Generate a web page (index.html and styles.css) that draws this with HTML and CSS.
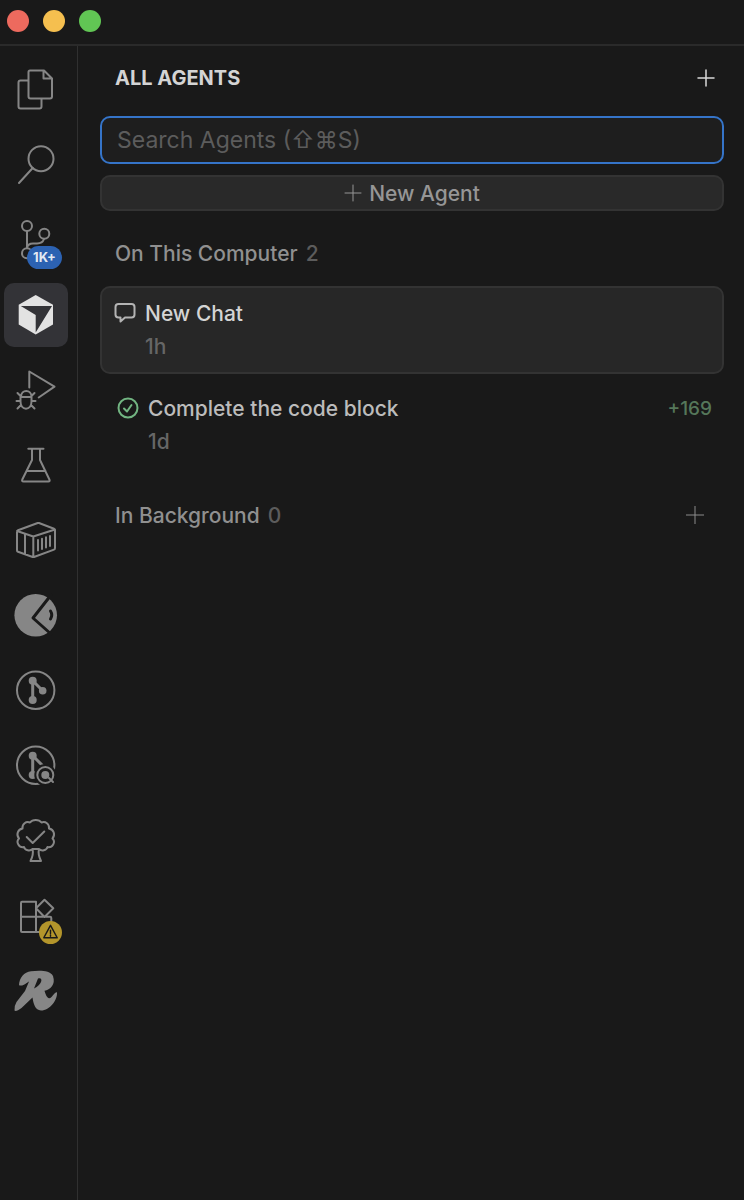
FILE: index.html
```html
<!DOCTYPE html>
<html lang="en">
  <head>
    <meta charset="utf-8" />
    <title>All Agents</title>
    <link rel="stylesheet" href="styles.css">
  </head>
  <body>
    <header class="titlebar">
      <button class="light red" aria-label="Close"></button>
      <button class="light yellow" aria-label="Minimize"></button>
      <button class="light green" aria-label="Zoom"></button>
    </header>

    <div class="window">
      <nav class="activity-bar">
        <button class="activity" aria-label="Explorer">
          <svg viewBox="0 0 64 64">
            <path d="M26 12.500H40L48 20.500V38.500Q48 40.500 46 40.500H26.500Q24.500 40.500 24.500 38.500V14Q24.500 12.500 26 12.500ZM39.500 12.500V20.500H48M24.500 22.500H16.500Q14.500 22.500 14.500 24.500V48.500Q14.500 50.500 16.500 50.500H35.500Q37.500 50.500 37.500 48.500V40.500" />
          </svg>
        </button>
        <button class="activity" aria-label="Search">
          <svg viewBox="0 0 64 64">
            <circle cx="37" cy="25.700" r="12.500" />
            <path d="M28.700 35L15 50" />
          </svg>
        </button>
        <button class="activity" aria-label="Source Control">
          <svg viewBox="0 0 64 64">
            <circle cx="23" cy="18" r="5" />
            <circle cx="40.300" cy="25.700" r="5" />
            <circle cx="23" cy="45.300" r="5" />
            <path d="M23 23V40M40 31C39 34 37 35.500 33 35.500H29C25.500 35.500 23.500 37 23 40" />
          </svg>
          <span class="badge count">1K+</span>
        </button>
        <button class="activity active" aria-label="Agents">
          <svg viewBox="0 0 64 64">
            <path class="solid" d="M31.700 12L49 21.800V41.600L31.700 51.500L14.700 41.600V21.800Z" />
            <path class="cut" d="M16.800 23H48L31.700 49.500V32Z" />
          </svg>
        </button>
        <button class="activity" aria-label="Run and Debug">
          <svg viewBox="0 0 64 64">
            <path d="M25.300 29.500V13.500L50.500 28.700L34.700 39.500" />
            <path d="M17 39C17 31 27.500 31 27.500 39V43.500C27.500 53 16.500 53 16.500 43.500V39ZM16.500 39H27.500M16.500 38L13.500 35M27.500 38L30.500 35M16 43H12.500M28 43H31.500M17 47L13.500 50.500M27 47L30.500 50.500" />
          </svg>
        </button>
        <button class="activity" aria-label="Testing">
          <svg viewBox="0 0 64 64">
            <path d="M24.300 15.700H39.500M28 16V27L18.300 46.500Q17.500 48.500 19.500 48.500H44.300Q46.300 48.500 45.400 46.500L36 27V16M22.500 38H41.500" />
          </svg>
        </button>
        <button class="activity" aria-label="Containers">
          <svg viewBox="0 0 64 64">
            <path d="M33.700 15Q34.300 14.800 35 15L50 20.700Q51 21.100 51 22V40Q51 41.300 50 41.600L30 49Q29.300 49.200 28.600 49L14 43.800Q13 43.500 13 42.500V24Q13 22.700 14 22.300ZM13 23L29.300 28.500L51 21.500M29.300 28.500V49M21 26V46M34 32V42.500M38 30.700V41M42 29.300V39.600M46 28V38" />
          </svg>
        </button>
        <button class="activity" aria-label="Test Explorer">
          <svg viewBox="0 0 64 64">
            <circle class="solid" cx="31.700" cy="32.200" r="21.300" />
            <path class="gap" d="M47 12L29 35L47 51M46.500 28Q49 32 46.500 36" />
          </svg>
        </button>
        <button class="activity" aria-label="GitLens">
          <svg viewBox="0 0 64 64">
            <circle cx="31.700" cy="32.300" r="18.700" />
            <path class="branch" d="M28.700 22.700V42M28.700 22.700L38.700 32.700" />
            <circle class="solid" cx="28.700" cy="22.700" r="4" />
            <circle class="solid" cx="38.700" cy="32.700" r="3.800" />
            <circle class="solid" cx="28.700" cy="42" r="4" />
          </svg>
        </button>
        <button class="activity" aria-label="GitLens Inspect">
          <svg viewBox="0 0 64 64">
            <circle cx="31.700" cy="32.300" r="18.700" />
            <path class="branch" d="M28.700 22.700V42M28.700 22.700L38.700 32.700" />
            <circle class="solid" cx="28.700" cy="22.700" r="4" />
            <circle class="solid" cx="28.700" cy="42" r="4" />
            <circle class="halo" cx="41.300" cy="42" r="11" />
            <circle class="lens" cx="41.300" cy="42" r="8" />
            <circle class="solid" cx="41.300" cy="42" r="4" />
            <path class="lens" d="M45 45L49 49" />
          </svg>
        </button>
        <button class="activity" aria-label="Tree">
          <svg viewBox="0 0 64 64">
            <path d="M28.500 41C26 43.500 21 42.500 20 39C15 40 11.500 34 15 30.500C12 27 13.500 21.500 18.500 20.500C18 16 22 13 26 14.500C28.500 11 35 11 37.500 14.500C41.500 13 45.500 16 45 20.500C50 21.500 51.500 27 48.500 30.500C52 34 48.500 40 43.500 39C42.500 42.500 37.500 43.500 35 41M28.500 41H35M28.500 41C29.500 45 28.500 49 26.500 53H37C35 49 34 45 35 41" />
            <path d="M22.700 29L28.700 35L40.300 23.500" />
          </svg>
        </button>
        <button class="activity" aria-label="Extensions">
          <svg viewBox="0 0 64 64">
            <path d="M18 18.700H32V49H18Q17 49 17 48V20Q17 18.700 18 18.700ZM17 33.700H46Q47.300 33.700 47.300 35V49H32M40.500 16.700L49.300 25.300L40.500 34L32 25.300Z" />
          </svg>
          <span class="badge warning">
            <svg viewBox="0 0 24 24">
              <path d="M12 4.500L19 17.500H5ZM12 9.500V13M12 14.500V16" />
            </svg>
          </span>
        </button>
        <button class="activity" aria-label="R">
          <svg viewBox="0 0 64 64">
            <path class="solid" d="M15 27.300C15.300 20 20 14 27 13.300C35 12.500 46 12 49 18C52 27 46 31.500 40.500 32.800C42 38 44 42.500 47.500 39C50 36.500 51.500 33.500 53 34.500C53.500 42 46 52.500 37 52.500C31 52 29.500 46 28.500 39.500L17.500 50Q12 54 10.500 52.500Q10 48 12.500 44L21 33L25 23.500C22 25 20 28.500 15 27.300Z" />
            <path class="gap-fill" d="M34 20.500C39 18.500 39 26 30 30.500Z" />
          </svg>
        </button>
      </nav>

      <main class="panel">
        <div class="panel-header">
          <h1>ALL AGENTS</h1>
          <button class="add bright" aria-label="Add agent">
            <svg viewBox="0 0 18 18"><path d="M9 1V17M1 9H17" /></svg>
          </button>
        </div>

        <input class="search" type="text" aria-label="Search Agents" placeholder="Search Agents (⇧⌘S)" />
        <button class="new-agent">
          <svg viewBox="0 0 18 18"><path d="M9 1V17M1 9H17" /></svg>
          New Agent
        </button>

        <div class="section">
          <h2>On This Computer</h2>
          <span class="total">2</span>
        </div>
        <div class="agents">
          <div class="agent selected">
            <svg class="agent-icon" viewBox="0 0 22 22">
              <path d="M4.500 2H17.500Q20.500 2 20.500 5V12.500Q20.500 15.500 17.500 15.500H11L6.500 19.500V15.500H4.500Q1.500 15.500 1.500 12.500V5Q1.500 2 4.500 2Z" />
            </svg>
            <div class="agent-text">
              <h3>New Chat</h3>
              <div class="time">1h</div>
            </div>
          </div>
          <div class="agent done">
            <svg class="agent-icon" viewBox="0 0 22 22">
              <circle cx="11" cy="11" r="9.500" />
              <path d="M7 11.500L10 14.500L14.500 8" />
            </svg>
            <div class="agent-text">
              <h3>Complete the code block</h3>
              <div class="time">1d</div>
            </div>
            <span class="added">+169</span>
          </div>
        </div>

        <div class="section">
          <h2>In Background</h2>
          <span class="total">0</span>
          <button class="add" aria-label="Add background agent">
            <svg viewBox="0 0 18 18"><path d="M9 0V18M0 9H18" /></svg>
          </button>
        </div>
      </main>
    </div>
  </body>
</html>
```
FILE: styles.css
```css
* {
  box-sizing: border-box;
}
body {
  display: flex;
  flex-direction: column;
  min-height: 100vh;
  margin: 0;
  background-color: #191919;
  color: #d4d4d4;
  font-family: Inter, "Liberation Sans", "DejaVu Sans", sans-serif;
  font-size: 21px;
  font-weight: 500;
}
h1,
h2,
h3 {
  margin: 0;
  font-size: inherit;
  font-weight: inherit;
}
button {
  padding: 0;
  border: 0;
  background: none;
  color: inherit;
  font: inherit;
}
svg {
  display: block;
  fill: none;
  stroke: currentColor;
  stroke-width: 2;
  stroke-linecap: round;
  stroke-linejoin: round;
}

/* title bar */
.titlebar {
  display: flex;
  align-items: center;
  gap: 14px;
  height: 46px;
  padding: 0 7px 2px;
  border-bottom: 2px solid #2a2a2a;
}
.light {
  width: 22px;
  height: 22px;
  border-radius: 50%;
}
.light.red {
  background-color: #ed6a5e;
}
.light.yellow {
  background-color: #f5bf4f;
}
.light.green {
  background-color: #61c554;
}

.window {
  display: flex;
  flex: 1;
}

/* activity bar */
.activity-bar {
  display: flex;
  flex-direction: column;
  gap: 11px;
  flex: none;
  padding: 12px 9px 12px 4px;
  border-right: 1px solid #303030;
}
.activity {
  position: relative;
  width: 64px;
  height: 64px;
  border-radius: 10px;
  color: #868686;
}
.activity.active {
  background-color: #333337;
  color: #e2e2e2;
}
.solid {
  fill: currentColor;
  stroke: none;
}
.cut {
  fill: #333337;
  stroke: none;
}
.gap {
  stroke: #191919;
  stroke-width: 3;
}
.gap-fill,
.halo {
  fill: #191919;
  stroke: none;
}
.branch {
  stroke-width: 3;
}
.badge {
  position: absolute;
  right: 6px;
  bottom: 3px;
  border-radius: 12px;
}
.count {
  width: 35px;
  height: 23px;
  background-color: #2c62b2;
  color: #e4e9f2;
  font-size: 13px;
  font-weight: 700;
  line-height: 23px;
  text-align: center;
}
.warning {
  width: 23px;
  height: 23px;
  background-color: #b3952b;
  color: #191919;
}
.warning svg {
  stroke-width: 1.5;
}

/* agents panel */
.panel {
  flex: 1;
  min-width: 0;
  padding: 0 20px 0 22px;
}
.panel-header {
  display: flex;
  align-items: center;
  justify-content: space-between;
  height: 64px;
  padding: 0 9px 0 15px;
}
.panel-header h1 {
  font-size: 20px;
  font-weight: 700;
}
.add {
  margin-left: auto;
  color: #8c8c8c;
}
.add svg {
  width: 18px;
  height: 18px;
  stroke-width: 1;
}
.bright {
  color: #d8d8d8;
}
.bright svg {
  stroke-width: 1.5;
}
.search {
  display: block;
  width: 100%;
  height: 48px;
  margin: 6px 0 11px;
  padding: 0 15px;
  border: 2px solid #3574c8;
  border-radius: 10px;
  outline: 0;
  background-color: #1e1e1e;
  color: #d4d4d4;
  font-family: inherit;
  font-size: 23px;
}
.search::placeholder {
  color: #5c5c5c;
  opacity: 1;
}
.new-agent {
  display: flex;
  align-items: center;
  justify-content: center;
  gap: 7px;
  width: 100%;
  height: 36px;
  border: 2px solid #333;
  border-radius: 10px;
  background-color: #292929;
  color: #969696;
}
.new-agent svg {
  width: 18px;
  height: 18px;
  stroke-width: 1;
}
.section {
  display: flex;
  align-items: center;
  gap: 8px;
  height: 60px;
  margin: 12px 0 3px;
  padding: 0 20px 0 15px;
}
.section h2 {
  color: #909090;
}
.total {
  color: #5c5c5c;
}
.agents {
  display: flex;
  flex-direction: column;
  gap: 7px;
  padding-bottom: 4px;
}
.agent {
  display: flex;
  gap: 9px;
  padding: 9px 10px 9px 12px;
  border: 2px solid transparent;
  border-radius: 10px;
  line-height: 33px;
}
.agent.selected {
  border-color: #333;
  background-color: #272727;
}
.agent.done {
  padding-left: 15px;
}
.agent-icon {
  flex: none;
  width: 22px;
  height: 22px;
  margin-top: 5px;
  color: #b4b4b4;
}
.done .agent-icon {
  color: #72b582;
}
.agent-text {
  flex: 1;
  min-width: 0;
}
.agent h3 {
  color: #bcbcbc;
}
.agent.selected h3 {
  color: #d4d4d4;
}
.time {
  color: #666;
}
.added {
  color: #55775a;
  font-size: 19px;
}
```
